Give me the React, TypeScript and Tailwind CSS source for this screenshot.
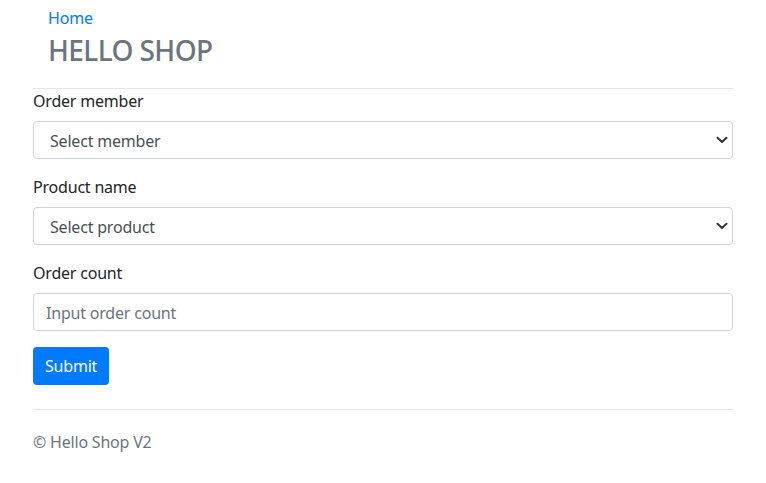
import React from "react";

function Chevron() {
  return (
    <svg
      className="pointer-events-none absolute right-[5px] top-1/2 -translate-y-1/2"
      width="12"
      height="8"
      viewBox="0 0 12 8"
      fill="none"
    >
      <path d="M1.5 1.8 L6 6 L10.5 1.8" stroke="#333" strokeWidth="2" strokeLinecap="round" strokeLinejoin="round" />
    </svg>
  );
}

function SelectBox({ label }: { label: string }) {
  return (
    <div className="relative">
      <select
        defaultValue=""
        className="block h-[38px] w-full appearance-none rounded-[4px] border border-[#ced4da] bg-white pl-[16px] pr-8 pt-[2px] text-[16px] tracking-[-0.2px] text-[#495057] outline-none"
      >
        <option value="">{label}</option>
      </select>
      <Chevron />
    </div>
  );
}

export default function App() {
  return (
    <div
      className="min-h-[483px] bg-white text-[16px] leading-[24px] tracking-[-0.2px] text-[#212529]"
      style={{ fontFamily: '"Noto Sans", "Open Sans", sans-serif' }}
    >
      <div className="ml-[33px] w-[700px]">
        <div className="border-b border-[#e5e5e5] px-[15px] pt-[6px] pb-[21px]">
          <a href="#" className="block text-[#007bff]">
            Home
          </a>
          <h3 className="mt-[3px] text-[28px] font-medium leading-[34px] tracking-[-0.6px] text-[#6c757d]">HELLO SHOP</h3>
        </div>
        <form className="flex flex-col" onSubmit={(e) => e.preventDefault()}>
          <div className="mb-[16px]">
            <label className="mb-[8px] block">Order member</label>
            <SelectBox label="Select member" />
          </div>
          <div className="mb-[16px]">
            <label className="mb-[8px] block">Product name</label>
            <SelectBox label="Select product" />
          </div>
          <div className="mb-[16px]">
            <label className="mb-[8px] block">Order count</label>
            <input
              type="text"
              placeholder="Input order count"
              className="block h-[38px] w-full rounded-[4px] border border-[#ced4da] bg-white px-[12px] pt-[2px] text-[16px] tracking-[-0.2px] text-[#495057] outline-none placeholder:text-[#6c757d]"
            />
          </div>
          <div>
            <button
              type="submit"
              className="h-[38px] rounded-[4px] bg-[#007bff] px-[12px] text-[16px] tracking-[-0.2px] text-white"
            >
              Submit
            </button>
          </div>
        </form>
        <div className="mt-[24px] border-t border-[#e5e5e5] pt-[20px] text-[#6c757d]">© Hello Shop V2</div>
      </div>
    </div>
  );
}
